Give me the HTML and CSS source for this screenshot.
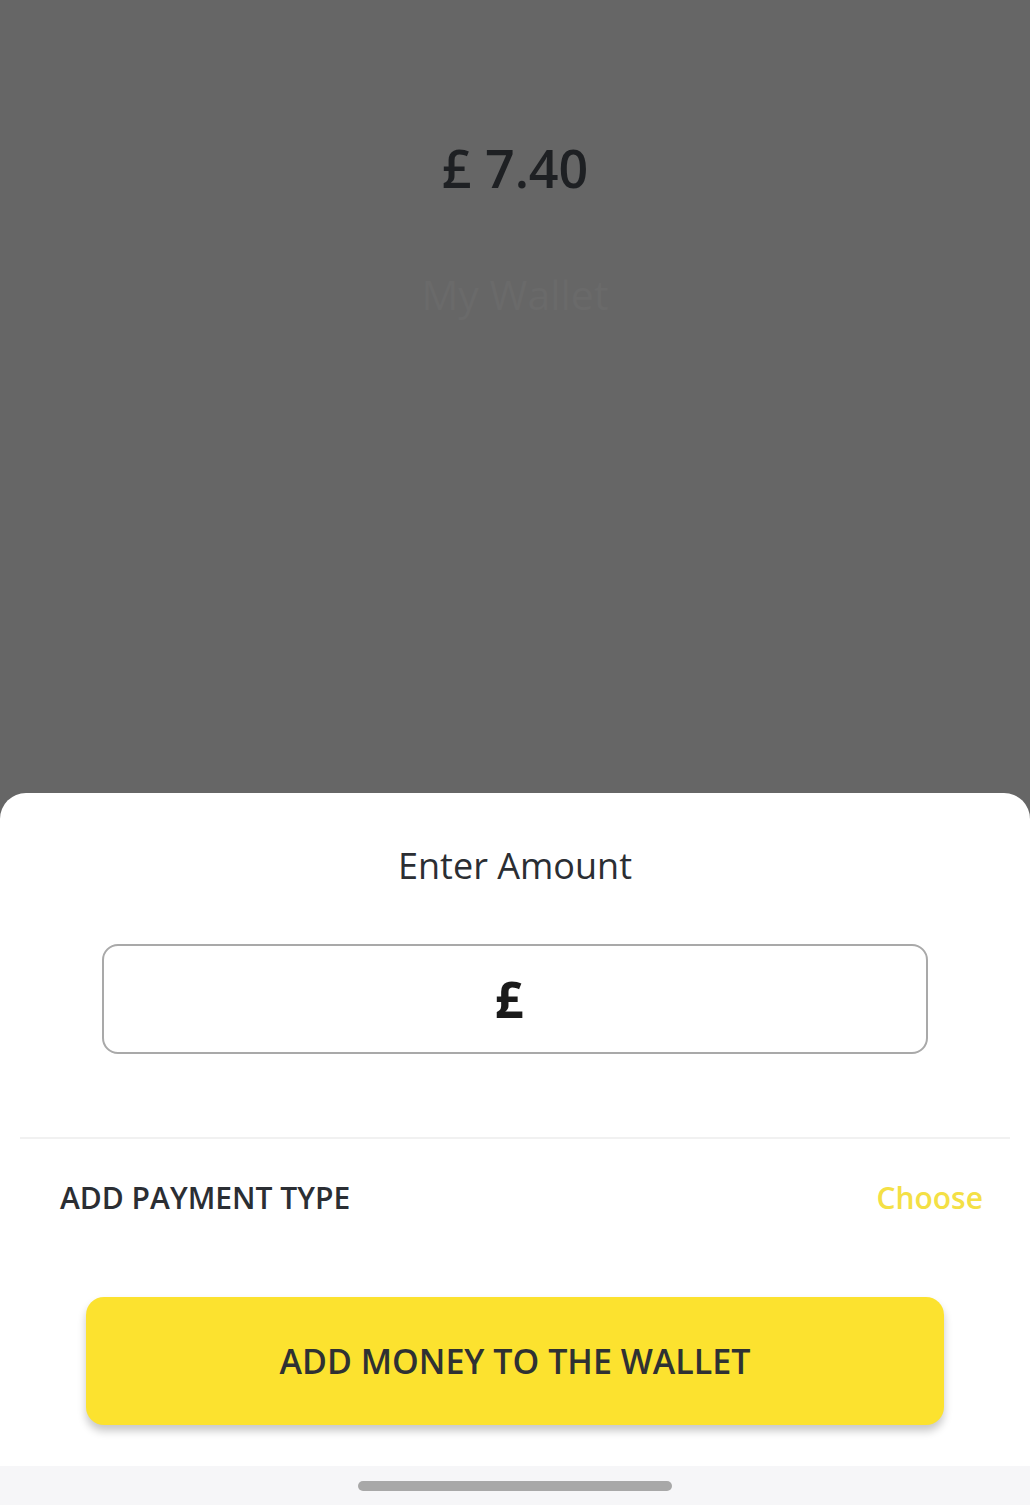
FILE: index.html
```html
<!DOCTYPE html>
<html lang="en">
<head>
    <meta charset="UTF-8">
    <meta name="viewport" content="width=device-width, initial-scale=1.0">
    <title>My Wallet</title>
    <link rel="stylesheet" href="styles.css">
</head>
<body>
    <!-- wallet page, dimmed behind the sheet -->
    <div class="backdrop">
        <div class="balance">£ 7.40</div>
        <div class="wallet-title">My Wallet</div>
    </div>

    <!-- bottom sheet -->
    <div class="sheet">
        <div class="sheet-title">Enter Amount</div>
        <div class="amount-box">
            <input type="text" class="amount-input" value="£">
        </div>
        <div class="divider"></div>
        <div class="payment-row">
            <span class="payment-label">ADD PAYMENT TYPE</span>
            <span class="payment-choose">Choose</span>
        </div>
        <button class="add-button">ADD MONEY TO THE WALLET</button>
        <div class="home-bar">
            <div class="home-handle"></div>
        </div>
    </div>
</body>
</html>
```

FILE: styles.css
```css
/* general */
body {
    margin: 0;
    height: 1506px;
    display: flex;
    flex-direction: column;
    background-color: #666666;
    font-family: "Open Sans", Arial, sans-serif;
    color: #2b2e33;
}

/* dimmed page */
.backdrop {
    height: 793px;
    display: flex;
    flex-direction: column;
    align-items: center;
    padding-top: 137px;
    box-sizing: border-box;
}
.balance {
    font-size: 52px;
    line-height: 62px;
    font-weight: 600;
    color: #1e2023;
}
.wallet-title {
    margin-top: 70px;
    font-size: 41px;
    line-height: 50px;
    font-weight: 500;
    color: #6a6a6a;
}

/* sheet */
.sheet {
    flex: 1;
    background-color: #fff;
    border-radius: 26px 26px 0 0;
    display: flex;
    flex-direction: column;
    padding-top: 49px;
}
.sheet-title {
    text-align: center;
    font-size: 36px;
    line-height: 48px;
    font-weight: 500;
    color: #2b2e33;
}
.amount-box {
    margin: 54px 102px 0;
    height: 110px;
    border: 2px solid #a9a9a9;
    border-radius: 16px;
    box-sizing: border-box;
    display: flex;
}
.amount-input {
    flex: 1;
    border: none;
    background: transparent;
    text-align: center;
    font-family: "Open Sans", Arial, sans-serif;
    font-size: 50px;
    font-weight: 700;
    color: #1a1a1a;
    padding: 0 12px 0 0;
    outline: none;
}
.divider {
    margin: 83px 20px 0;
    height: 2px;
    background-color: #f1f1f1;
}
.payment-row {
    margin-top: 40px;
    padding: 0 47px 0 60px;
    display: flex;
    justify-content: space-between;
    align-items: baseline;
    line-height: 38px;
}
.payment-label {
    font-size: 30px;
    font-weight: 600;
    color: #2b2e33;
}
.payment-choose {
    font-size: 30px;
    font-weight: 600;
    color: #f4e045;
}
.add-button {
    margin: 80px 86px 0;
    height: 128px;
    border: none;
    border-radius: 18px;
    background-color: #fce22f;
    box-shadow: 0 6px 8px rgba(0, 0, 0, 0.22);
    font-family: "Open Sans", Arial, sans-serif;
    font-size: 34px;
    font-weight: 600;
    color: #2f3133;
    cursor: pointer;
}
.home-bar {
    margin-top: 41px;
    height: 39px;
    background-color: #f6f6f8;
    display: flex;
    justify-content: center;
    padding-top: 15px;
    box-sizing: border-box;
}
.home-handle {
    width: 314px;
    height: 10px;
    border-radius: 5px;
    background-color: #a8a8a8;
}
```
